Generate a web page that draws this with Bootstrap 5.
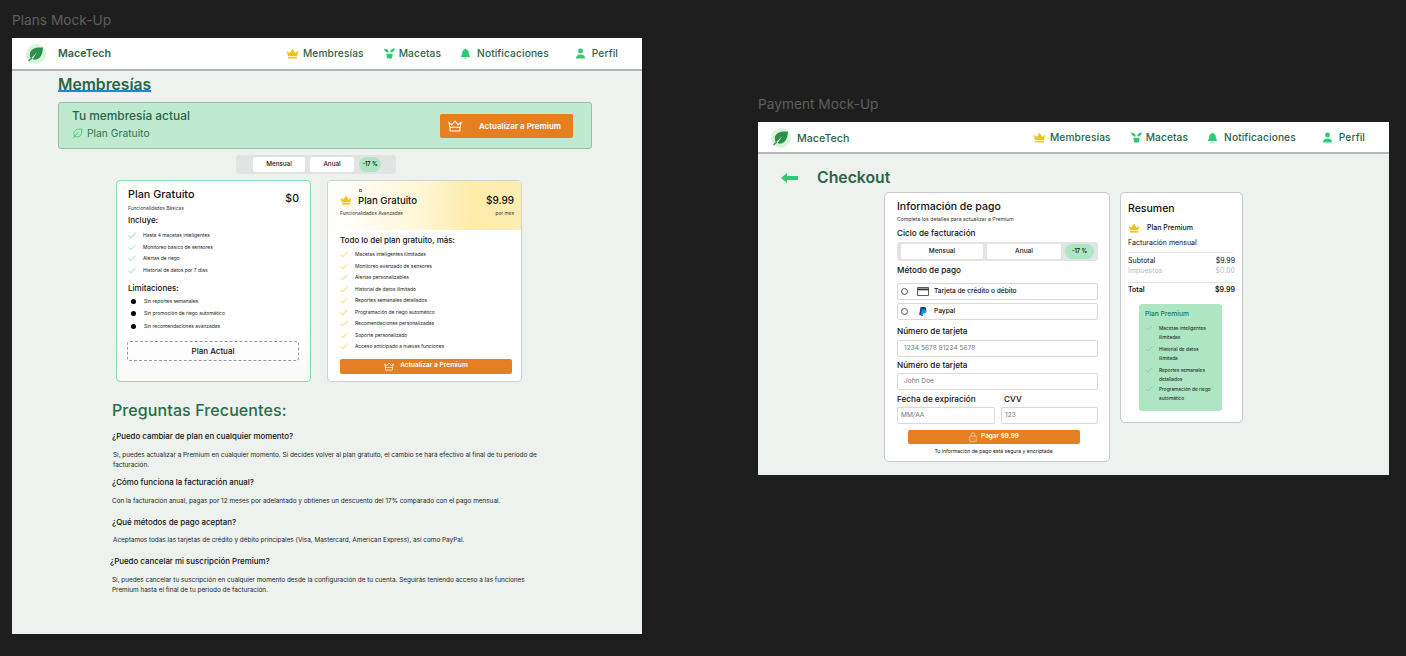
<!DOCTYPE html>
<html lang="es"><head><meta charset="utf-8"><title>MaceTech</title>
<link href="https://cdn.jsdelivr.net/npm/bootstrap@5.3.0/dist/css/bootstrap.min.css" rel="stylesheet">
<style>
html,body{height:100%}
body{background:#1e1e1e;font-family:Inter,"Liberation Sans",sans-serif;color:#111;overflow:hidden;position:relative;margin:0}
.mock-label{position:absolute;font-size:13.7px;line-height:17px;color:#5f5f5f}
.l1{left:12px;top:12px}.l2{left:758px;top:96px}
.mock{position:absolute;background:#edf2ee;overflow:hidden;will-change:opacity}
.f1{left:12px;top:38px;width:630px;height:596px}
.f2{left:758px;top:122px;width:631px;height:353px}
.topbar{height:33px;background:#fff;border-bottom:2px solid #b3b8b4;padding:1px 24px 0 14px;color:#2a654a}
.f2 .topbar{height:32px;padding-left:13px}
.brand{font-size:10.7px;font-weight:600;margin-left:12px;color:#2a654a;padding-top:1px}
.f2 .brand{margin-left:6px;font-weight:500;padding-top:3px}
.navi{font-size:10.2px;font-weight:500;gap:4px;color:#2a654a;letter-spacing:.1px}
.g6{gap:6px}
.gap-a{margin-left:20px}.gap-b{margin-left:19px}.gap-c{margin-left:26px}
.pg{padding:7px 0 0 46px}
.ttl{display:block;height:14px;line-height:14px;font-size:15.7px;font-weight:600;color:#2a654a;border-bottom:2px solid #1e88d6;width:93px;white-space:nowrap;margin:0}
.curr{width:534px;height:47px;margin-top:10px;background:#bfeacf;border:1px solid #8dc2a2;border-radius:3px;padding:0 18px 0 13px;color:#2a654a}
.curr-txt{padding-bottom:3px}
.curr-t{font-size:11.9px;font-weight:500;line-height:15px}
.curr-s{font-size:10.3px;line-height:14px;margin-top:3px;gap:4px;color:#33705a}
.btn-o{background:#e67e22;color:#fff;border:0;border-radius:2px;font-weight:600;padding:0}
.bo1{width:133px;height:24px;font-size:8px;padding:0 12px 0 8px}
.tog{background:#e2e4e3;border-radius:3px;height:19px;width:160px;margin:6px 0 0 178px;padding:0 15px 0 17px;gap:5px;font-size:6.3px;font-weight:500}
.tb{background:#fff;height:15px;border-radius:2px;display:flex;align-items:center;justify-content:center}
.disc{background:#aee5c3;border-radius:9px;height:15px;display:flex;align-items:center;justify-content:center;font-size:5.6px;font-weight:600}
.w-52{width:52px}.w-44{width:44px}.w-22{width:22px}.w-82{width:82px}.w-74{width:74px}.w-29{width:29px}
.plans{margin:6px 0 0 58px;gap:16px}
.pc{width:195px;height:202px;border-radius:4px;background:#fff;overflow:hidden}
.pc-a{border:1.5px solid #82e0a8;padding:7px 11px 0 11px;background:linear-gradient(#fff 70%,#f8f9f8)}
.pc-b{border:1.5px solid #d0d3d1}
.pname{font-size:10.8px;font-weight:500;line-height:13px}
.pc-b .pname{font-size:9.6px;margin-left:2px}
.tiny{font-size:4.8px;line-height:6px;color:#333}
.tiny-b{font-size:5.15px;line-height:6px;color:#333;margin-top:2px}
.price{font-size:10.6px;font-weight:500;line-height:14px}
.pc-b .price{font-size:10px}
.sec{font-size:8px;font-weight:500;line-height:11px}
.lst{list-style:none;margin:0;padding:0;font-size:4.9px;color:#222}
.lst li{display:flex;align-items:center;height:11.5px;white-space:nowrap}
.lst .ck{width:8px;height:7px;margin-right:7px;flex:none}
.lim li{height:12.5px}
.dot{width:5px;height:5px;border-radius:50%;background:#000;margin:0 8px 0 3px;flex:none}
.dash{height:20px;border:1px dashed #999;border-radius:3px;font-size:8px;font-weight:500;margin:8px 0 0 -1px}
.phead{height:49px;background:linear-gradient(90deg,#fffefa 8%,#fff6d2 50%,#fdeba8 75%,#fdeeb4);padding:12px 7px 0 12px;position:relative}
.head-row{height:14px}
.sq{position:absolute;left:31px;top:8px;width:3px;height:3px;border:1px solid #777}
.pb2{padding:5px 9px 0 12px}
.bo2{width:172px;height:15px;font-size:6.6px;gap:6px;margin-top:6px}
.faq{margin:18px 0 0 54px;width:440px}
.faq-h{font-size:16px;font-weight:500;line-height:20px;color:#2a6b4a;letter-spacing:.1px;margin:0}
.q{font-size:7.9px;font-weight:500;line-height:11px;white-space:nowrap;margin-top:10px}
.a{font-size:6.4px;line-height:9.5px;margin:9px 0 0;color:#222}
.q1{margin-top:11px}.q2{margin-top:7px}.q4{margin-top:11px;margin-left:-2px}.a3{margin-top:8px}.inset{padding-left:1px}
.back{width:17px;height:10px}
.chk{font-size:15.8px;font-weight:600;color:#2a654a;line-height:18px;margin:0 0 0 19px}
.co-head{padding:15px 0 0 23px}
.co-wrap{margin:5px 0 0 126px;gap:10px}
.box{background:#fff;border:1px solid #c6cac7;border-radius:5px}
.bx-a{width:226px;height:270px;padding:7px 11px 0 12px}
.bx-b{width:123px;height:231px;padding:9px 7px 0 7px}
.h-inf{font-size:10.5px;font-weight:500;line-height:14px}
.lab{font-size:8.2px;font-weight:500;line-height:11px;white-space:nowrap}
.tog2{background:#e2e4e3;border-radius:3px;height:19px;padding:0 4px;gap:4px;margin-top:3px;font-size:6.5px;font-weight:500}
.pay{height:17px;border:1px solid #d7dad8;border-radius:2px;background:#fff;font-size:6.6px;font-weight:500}
.pay svg{margin-right:5px}
.rad{width:7px;height:7px;border:1px solid #555;border-radius:50%;margin:0 9px 0 3px;flex:none}
.fake{height:17px;border:1px solid #d7dad8;border-radius:2px;background:#fff;font-size:6.6px;color:#777;padding-left:6px;display:flex;align-items:center;margin-top:3px}
.col-f{width:98px}
.col-g{width:97px}
.mt-s{margin-top:2px}.pl-s{padding-left:3px}
.lab-a{margin-top:6px}.lab-b{margin-top:4px}.lab-c{margin-top:3px}
.pay-a{margin-top:7px}.pay-b{margin-top:3px}
.two{margin-top:4px;gap:6px}
.bo3{width:172px;height:14px;font-size:6.4px;gap:4px;margin:6px 0 0 11px}
.secure{font-size:5.1px;text-align:center;margin-top:4px;line-height:7px;padding-right:8px}
.res{font-size:10.5px;font-weight:500;line-height:14px}
.sm{font-size:7px;line-height:10px;white-space:nowrap}
.plan-r{margin-top:7px;gap:7px}
.t5{margin-top:5px}.t4{margin-top:4px}.t3{margin-top:3px}.t2{margin-top:2px}.t1{margin-top:1px}.t0{margin-top:0}.t6{margin-top:6px}.t7{margin-top:7px}
.rule{height:1px;background:#e4e6e5;width:105px}
.muted-a{color:#b8bcba}
.perk{width:83px;height:107px;background:#aee5c3;border-radius:3px;margin:9px 0 0 11px;padding:5px 6px 0}
.perk-t{font-size:6.7px;font-weight:500;color:#2f7052;line-height:10px}
.perk ul{list-style:none;padding:0;margin:5px 0 0;font-size:4.8px;line-height:9px}
.perk li{display:flex;margin-bottom:3px}
.perk li:nth-child(3){margin-bottom:1px}
.perk .ck{width:8px;height:6px;flex:none;margin:1px 6px 0 0}
</style></head><body>
<svg width="0" height="0" class="position-absolute"><defs>
<symbol id="i-crown" viewBox="0 0 16 13"><path fill="#f2c40f" d="M1 3.200 4.600 6 8 .6 11.400 6 15 3.200 13.600 9.600H2.400Z"/><rect x="2.400" y="10.600" width="11.200" height="2" fill="#f2c40f"/></symbol>
<symbol id="i-crownw" viewBox="0 0 16 13"><path fill="none" stroke="#fff" stroke-width="1.2" d="M1 2.500 4.400 5 8 .9 11.600 5 15 2.500 13.800 8H2.200ZM2.400 8v4.200h11.200V8"/></symbol>
<symbol id="i-logo" viewBox="0 0 20 20"><circle cx="10" cy="10" r="10" fill="#d9f6dc"/><path fill="#2f8f4e" d="M17 3.500C10 3 4.500 4 3.800 10c-.2 2 .5 3.500 1.200 4.300L11 8.500 6.500 15.200c1.800.8 4.800.7 7-1.400C16.300 11 16.700 7 17 3.500Z"/><path stroke="#2f8f4e" stroke-width="1.300" d="M2.500 17 6 13.800"/></symbol>
<symbol id="i-leaf" viewBox="0 0 12 12"><path fill="none" stroke="#2ecc71" stroke-width="1" d="M10.800 1.200C6 1 2.200 2 2 6c0 1.500.6 2.800 1.500 3.400 3 1 6.300-.4 6.800-3.400.3-1.600.4-3.200.5-4.800ZM1 11.200 7 4.500"/></symbol>
<symbol id="i-sprout" viewBox="0 0 12 12"><path fill="#2ecc71" d="M0 .8c3-.3 5 .8 5.200 4.200C2.500 5 .6 3.800 0 .8ZM12 .5C11.500 3.300 10 4.700 6.800 5 6.700 2 8.800.4 12 .5ZM2.500 6.300h7L8.600 11.500H3.400Z"/></symbol>
<symbol id="i-bell" viewBox="0 0 12 12"><path fill="#2ecc71" d="M6 .5c.6 0 1 .4 1 1 1.800.5 2.600 2 2.600 3.800 0 1.600.4 2.600 1.400 3.700v.7H1V9c1-1.100 1.400-2.100 1.400-3.700C2.400 3.500 3.200 2 5 1.500c0-.6.400-1 1-1ZM4.500 10.500h3c-.2.700-.8 1-1.500 1s-1.300-.3-1.500-1Z"/></symbol>
<symbol id="i-user" viewBox="0 0 12 12"><circle cx="6" cy="3.200" r="2.700" fill="#2ecc71"/><path fill="#2ecc71" d="M1 11.500c0-3 2-4.300 5-4.300s5 1.300 5 4.300Z"/></symbol>
<symbol id="i-ckg" viewBox="0 0 9 7"><path fill="none" stroke="#5fd48e" stroke-width=".8" d="M.5 3.500 3 6 8.500.7"/></symbol>
<symbol id="i-cky" viewBox="0 0 9 7"><path fill="none" stroke="#f4c430" stroke-width=".9" d="M.5 3.500 3 6 8.500.7"/></symbol>
<symbol id="i-lock" viewBox="0 0 10 12"><path fill="none" stroke="#fbd9b5" stroke-width=".9" d="M1 5h8v6.500H1ZM2.800 5V3a2.200 2.200 0 0 1 4.400 0v2M5 7.500v1.500"/></symbol>
<symbol id="i-card" viewBox="0 0 12 9"><path fill="none" stroke="#333" stroke-width=".8" d="M.5.500h11v8H.5Z"/><rect x=".5" y="1.500" width="11" height="1.800" fill="#333"/></symbol>
<symbol id="i-pp" viewBox="0 0 8 9"><path fill="#253b80" d="M1.500 0H5c1.800 0 2.500 1 2.200 2.500C6.800 4.300 5.500 5 4 5H3L2.500 8H.2Z"/><path fill="#179bd7" d="M2.800 2.500h3c1.500 0 2.100.8 1.800 2C7.300 6 6.200 6.500 5 6.500H4.300L3.900 9H1.800Z"/></symbol>
</defs></svg>

<div class="mock-label l1">Plans Mock-Up</div>
<section class="mock f1">
  <nav class="topbar d-flex align-items-center">
    <svg width="20" height="20"><use href="#i-logo"/></svg><span class="brand">MaceTech</span>
    <div class="d-flex align-items-center ms-auto">
      <div class="navi d-flex align-items-center"><svg width="13" height="11"><use href="#i-crown"/></svg>Membresías</div>
      <div class="navi gap-a d-flex align-items-center"><svg width="11" height="11"><use href="#i-sprout"/></svg>Macetas</div>
      <div class="navi g6 gap-b d-flex align-items-center"><svg width="11" height="11"><use href="#i-bell"/></svg>Notificaciones</div>
      <div class="navi g6 gap-c d-flex align-items-center"><svg width="11" height="11"><use href="#i-user"/></svg>Perfil</div>
    </div>
  </nav>
  <main class="pg">
    <h1 class="ttl">Membresías</h1>
    <div class="curr d-flex align-items-center justify-content-between">
      <div class="curr-txt"><div class="curr-t">Tu membresía actual</div><div class="curr-s d-flex align-items-center"><svg width="11" height="11"><use href="#i-leaf"/></svg>Plan Gratuito</div></div>
      <button class="btn-o bo1 d-flex align-items-center justify-content-between"><svg width="14" height="12"><use href="#i-crownw"/></svg><span>Actualizar a Premium</span></button>
    </div>
    <div class="tog d-flex align-items-center"><div class="tb w-52">Mensual</div><div class="tb w-44">Anual</div><div class="disc w-22">-17 %</div></div>
    <div class="plans d-flex">
      <article class="pc pc-a">
        <div class="d-flex justify-content-between"><div><div class="pname">Plan Gratuito</div><div class="tiny mt-1">Funcionalidades Básicas</div></div><div class="price mt-1">$0</div></div>
        <div class="sec t4">Incluye:</div>
        <ul class="lst t4"><li><svg class="ck"><use href="#i-ckg"/></svg>Hasta 4 macetas inteligentes</li><li><svg class="ck"><use href="#i-ckg"/></svg>Monitoreo básico de sensores</li><li><svg class="ck"><use href="#i-ckg"/></svg>Alertas de riego</li><li><svg class="ck"><use href="#i-ckg"/></svg>Historial de datos por 7 días</li></ul>
        <div class="sec t7">Limitaciones:</div>
        <ul class="lst lim t1"><li><i class="dot"></i>Sin reportes semanales</li><li><i class="dot"></i>Sin promoción de riego automático</li><li><i class="dot"></i>Sin recomendaciones avanzadas</li></ul>
        <div class="dash d-flex align-items-center justify-content-center">Plan Actual</div>
      </article>
      <article class="pc pc-b">
        <div class="phead"><i class="sq"></i>
          <div class="head-row d-flex align-items-center"><svg width="12" height="10" class="me-1"><use href="#i-crown"/></svg><span class="pname">Plan Gratuito</span><span class="price ms-auto">$9.99</span></div>
          <div class="tiny d-flex justify-content-between t3"><span>Funcionalidades Avanzadas</span><span>por mes</span></div>
        </div>
        <div class="pb2">
          <div class="sec">Todo lo del plan gratuito, más:</div>
          <ul class="lst t3"><li><svg class="ck"><use href="#i-cky"/></svg>Macetas inteligentes ilimitadas</li><li><svg class="ck"><use href="#i-cky"/></svg>Monitoreo avanzado de sensores</li><li><svg class="ck"><use href="#i-cky"/></svg>Alertas personalizables</li><li><svg class="ck"><use href="#i-cky"/></svg>Historial de datos ilimitado</li><li><svg class="ck"><use href="#i-cky"/></svg>Reportes semanales detallados</li><li><svg class="ck"><use href="#i-cky"/></svg>Programación de riego automático</li><li><svg class="ck"><use href="#i-cky"/></svg>Recomendaciones personalizadas</li><li><svg class="ck"><use href="#i-cky"/></svg>Soporte personalizado</li><li><svg class="ck"><use href="#i-cky"/></svg>Acceso anticipado a nuevas funciones</li></ul>
          <button class="btn-o bo2 d-flex align-items-center justify-content-center"><svg width="10" height="9"><use href="#i-crownw"/></svg>Actualizar a Premium</button>
        </div>
      </article>
    </div>
    <div class="faq">
      <h2 class="faq-h">Preguntas Frecuentes:</h2>
      <div class="q q1">¿Puedo cambiar de plan en cualquier momento?</div>
      <p class="a inset">Sí, puedes actualizar a Premium en cualquier momento. Si decides volver al plan gratuito, el cambio se hará efectivo al final de tu período de facturación.</p>
      <div class="q q2">¿Cómo funciona la facturación anual?</div>
      <p class="a">Con la facturación anual, pagas por 12 meses por adelantado y obtienes un descuento del 17% comparado con el pago mensual.</p>
      <div class="q">¿Qué métodos de pago aceptan?</div>
      <p class="a a3 inset">Aceptamos todas las tarjetas de crédito y débito principales (Visa, Mastercard, American Express), así como PayPal.</p>
      <div class="q q4">¿Puedo cancelar mi suscripción Premium?</div>
      <p class="a">Sí, puedes cancelar tu suscripción en cualquier momento desde la configuración de tu cuenta. Seguirás teniendo acceso a las funciones Premium hasta el final de tu período de facturación.</p>
    </div>
  </main>
</section>

<div class="mock-label l2">Payment Mock-Up</div>
<section class="mock f2">
  <nav class="topbar d-flex align-items-center">
    <svg width="20" height="20"><use href="#i-logo"/></svg><span class="brand">MaceTech</span>
    <div class="d-flex align-items-center ms-auto">
      <div class="navi d-flex align-items-center"><svg width="13" height="11"><use href="#i-crown"/></svg>Membresías</div>
      <div class="navi gap-a d-flex align-items-center"><svg width="11" height="11"><use href="#i-sprout"/></svg>Macetas</div>
      <div class="navi g6 gap-b d-flex align-items-center"><svg width="11" height="11"><use href="#i-bell"/></svg>Notificaciones</div>
      <div class="navi g6 gap-c d-flex align-items-center"><svg width="11" height="11"><use href="#i-user"/></svg>Perfil</div>
    </div>
  </nav>
  <div class="co-head d-flex align-items-center"><svg class="back" viewBox="0 0 17 10"><path fill="#2ecc71" d="M6 0v3h11v4H6v3L0 5Z"/></svg><h1 class="chk">Checkout</h1></div>
  <div class="co-wrap d-flex align-items-start">
    <div class="box bx-a">
      <div class="h-inf">Información de pago</div>
      <div class="tiny-b">Completa los detalles para actualizar a Premium</div>
      <div class="lab lab-a">Ciclo de facturación</div>
      <div class="tog2 d-flex align-items-center"><div class="tb w-82">Mensual</div><div class="tb w-74">Anual</div><div class="disc w-29">-17 %</div></div>
      <div class="lab lab-b">Método de pago</div>
      <div class="pay pay-a d-flex align-items-center"><i class="rad"></i><svg width="12" height="9"><use href="#i-card"/></svg>Tarjeta de crédito o débito</div>
      <div class="pay pay-b d-flex align-items-center"><i class="rad"></i><svg width="12" height="9"><use href="#i-pp"/></svg>Paypal</div>
      <div class="lab lab-a">Número de tarjeta</div>
      <div class="fake">1234 5678 91234 5678</div>
      <div class="lab lab-c">Número de tarjeta</div>
      <div class="fake mt-s">John Doe</div>
      <div class="two d-flex">
        <div class="col-f"><div class="lab">Fecha de expiración</div><div class="fake mt-s pl-s">MM/AA</div></div>
        <div class="col-g"><div class="lab pl-s">CVV</div><div class="fake mt-s pl-s">123</div></div>
      </div>
      <button class="btn-o bo3 d-flex align-items-center justify-content-center"><svg width="8" height="10"><use href="#i-lock"/></svg>Pagar $9.99</button>
      <div class="secure">Tu información de pago está segura y encriptada</div>
    </div>
    <aside class="box bx-b">
      <div class="res">Resumen</div>
      <div class="d-flex align-items-center sm fw-medium plan-r"><svg width="12" height="10"><use href="#i-crown"/></svg>Plan Premium</div>
      <div class="sm t5">Facturación mensual</div>
      <div class="rule t4"></div>
      <div class="sm d-flex justify-content-between t3"><span>Subtotal</span><span>$9.99</span></div>
      <div class="sm d-flex justify-content-between muted-a t0"><span>Impuestos</span><span>$0.00</span></div>
      <div class="rule t6"></div>
      <div class="sm fw-semibold d-flex justify-content-between t2"><span>Total</span><span>$9.99</span></div>
      <div class="perk">
        <div class="perk-t">Plan Premium</div>
        <ul><li><svg class="ck"><use href="#i-ckg"/></svg><span>Macetas inteligentes ilimitadas</span></li><li><svg class="ck"><use href="#i-ckg"/></svg><span>Historial de datos ilimitada</span></li><li><svg class="ck"><use href="#i-ckg"/></svg><span>Reportes semanales detallados</span></li><li><svg class="ck"><use href="#i-ckg"/></svg><span>Programación de riego automático</span></li></ul>
      </div>
    </aside>
  </div>
</section>
</body></html>
